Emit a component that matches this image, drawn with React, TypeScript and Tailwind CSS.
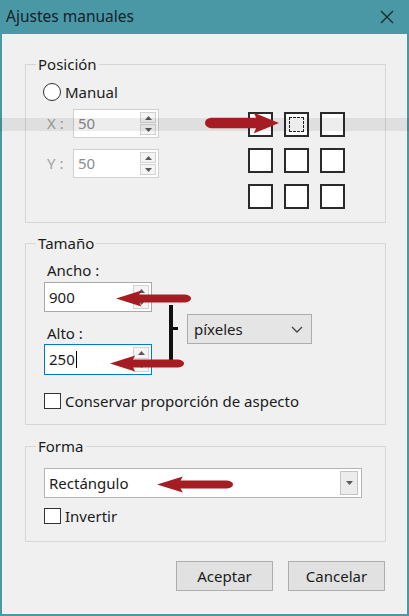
import React from "react";

function Tri({ up }: { up?: boolean }) {
  return (
    <svg width="7" height="4" viewBox="0 0 7 4">
      {up ? <path d="M0 4 L3.5 0 L7 4 Z" fill="#5a5a5a" /> : <path d="M0 0 L3.5 4 L7 0 Z" fill="#5a5a5a" />}
    </svg>
  );
}

function Spin() {
  return (
    <div className="flex flex-col w-[18px] h-full py-[2px] pr-[2px] gap-[1px]">
      <div className="flex-1 border border-[#d2d2d2] bg-[#f4f4f4] flex items-center justify-center">
        <Tri up />
      </div>
      <div className="flex-1 border border-[#d2d2d2] bg-[#f4f4f4] flex items-center justify-center">
        <Tri />
      </div>
    </div>
  );
}

function Square({ dotted }: { dotted?: boolean }) {
  return (
    <div className="w-[25px] h-[25px] border-2 border-[#2a2a2a] bg-white p-[3px]">
      {dotted && <div className="w-full h-full border border-dashed border-[#222]" />}
    </div>
  );
}

function Check() {
  return <div className="w-[17px] h-[16px] border border-[#333] bg-white" />;
}

const ARROW = "M0 15 L34 1 L31 8 L92 8 Q100 9.5 100 15 Q100 20.5 92 22 L31 22 L34 29 Z";

export default function App() {
  return (
    <div className="relative w-[409px] h-[616px] bg-[#4a97a6] flex flex-col font-['Noto_Sans',sans-serif] text-[15px] text-[#1b1b1b] overflow-hidden">
      <div className="h-[34px] flex items-center justify-between pl-[6px] pr-[15px]">
        <span className="text-[15.5px] text-[#13242a] leading-none">Ajustes manuales</span>
        <svg width="14" height="14" viewBox="0 0 14 14">
          <path d="M1 1 L13 13 M13 1 L1 13" stroke="#1a2a2e" strokeWidth="1.4" />
        </svg>
      </div>
      <div className="flex-1 mx-[2px] mb-[2px] bg-[#f0f0f0] flex flex-col pl-[23px] pr-[21px] pt-[20px]">
        {/* Posición */}
        <fieldset className="border border-[#d6d6d6] m-0 p-0 pb-[13px]">
          <legend className="ml-[10px] px-[2px] leading-[20px]">Posición</legend>
          <div className="flex items-center h-[20px] mt-[8px] ml-[17px] gap-[4px]">
            <div className="w-[18px] h-[18px] rounded-full border border-[#333] bg-white" />
            <span>Manual</span>
          </div>
          <div className="flex mt-[7px]">
            <div className="flex flex-col gap-[11px] ml-[21px]">
              <div className="flex items-center">
                <span className="w-[26px] text-[#a0a0a0]">X :</span>
                <div className="w-[86px] h-[29px] border border-[#d0d0d0] bg-white flex items-center">
                  <span className="flex-1 pl-[4px] text-[#8c8c8c]">50</span>
                  <Spin />
                </div>
              </div>
              <div className="flex items-center">
                <span className="w-[26px] text-[#a0a0a0]">Y :</span>
                <div className="w-[86px] h-[29px] border border-[#d0d0d0] bg-white flex items-center">
                  <span className="flex-1 pl-[4px] text-[#8c8c8c]">50</span>
                  <Spin />
                </div>
              </div>
            </div>
            <div className="grid grid-cols-3 gap-x-[11px] gap-y-[11px] ml-auto mr-[40px] mt-[3px]">
              <Square />
              <Square dotted />
              <Square />
              <Square />
              <Square />
              <Square />
              <Square />
              <Square />
              <Square />
            </div>
          </div>
        </fieldset>

        {/* Tamaño */}
        <fieldset className="border border-[#d6d6d6] m-0 p-0 pb-[13px] mt-[10px]">
          <legend className="ml-[10px] px-[2px] leading-[20px]">Tamaño</legend>
          <div className="flex items-start mt-[7px] ml-[18px]">
            <div className="flex flex-col w-[108px]">
              <span className="pl-[3px] leading-[20px]">Ancho :</span>
              <div className="mt-[2px] h-[30px] border border-[#a9a9a9] bg-white flex items-center">
                <span className="flex-1 pl-[4px]">900</span>
                <Spin />
              </div>
              <span className="pl-[3px] leading-[20px] mt-[11px]">Alto :</span>
              <div className="mt-[1px] h-[31px] border border-[#0078d7] bg-white flex items-center">
                <span className="flex-1 pl-[4px] flex items-center">
                  250<span className="inline-block w-[1px] h-[17px] bg-black ml-[1px]" />
                </span>
                <Spin />
              </div>
            </div>
            <svg className="ml-[17px] mt-[45px]" width="10" height="55" viewBox="0 0 10 55">
              <rect x="0" y="0" width="4" height="55" fill="#111" />
              <rect x="4" y="22" width="5" height="3" fill="#111" />
            </svg>
            <div className="ml-[8px] mt-[54px] w-[125px] h-[30px] border border-[#adadad] bg-[#e5e5e5] flex items-center justify-between pl-[6px] pr-[8px]">
              <span>píxeles</span>
              <svg width="12" height="7" viewBox="0 0 12 7">
                <path d="M1 1 L6 6 L11 1" stroke="#444" strokeWidth="1.3" fill="none" />
              </svg>
            </div>
          </div>
          <div className="flex items-center h-[20px] mt-[16px] ml-[18px] gap-[4px]">
            <Check />
            <span>Conservar proporción de aspecto</span>
          </div>
        </fieldset>

        {/* Forma */}
        <fieldset className="border border-[#d6d6d6] m-0 p-0 pb-[15px] mt-[11px]">
          <legend className="ml-[10px] px-[2px] leading-[20px]">Forma</legend>
          <div className="mt-[12px] ml-[18px] w-[318px] h-[30px] border border-[#b4b4b4] bg-white flex items-center justify-between pl-[4px] pr-[3px]">
            <span>Rectángulo</span>
            <div className="w-[18px] h-[24px] border border-[#c4c4c4] bg-[#ececec] flex items-center justify-center">
              <Tri />
            </div>
          </div>
          <div className="flex items-center h-[20px] mt-[8px] ml-[18px] gap-[4px]">
            <Check />
            <span>Invertir</span>
          </div>
        </fieldset>

        <div className="flex justify-end gap-[15px] mt-[19px] pr-[1px]">
          <button className="w-[97px] h-[30px] border border-[#adadad] bg-[#e1e1e1]">Aceptar</button>
          <button className="w-[97px] h-[30px] border border-[#adadad] bg-[#e1e1e1]">Cancelar</button>
        </div>
      </div>

      {/* light band */}
      <div className="absolute left-0 top-[118px] w-full h-[13px] bg-black/[0.07]" />

      {/* red arrows */}
      <svg className="absolute left-[205px] top-[112px] w-[74px] h-[22px]" viewBox="0 0 100 30" preserveAspectRatio="none">
        <g transform="translate(100,0) scale(-1,1)">
          <path d={ARROW} fill="#a51d22" />
        </g>
      </svg>
      <svg className="absolute left-[116px] top-[290px] w-[75px] h-[17px]" viewBox="0 0 100 30" preserveAspectRatio="none">
        <path d={ARROW} fill="#a51d22" />
      </svg>
      <svg className="absolute left-[110px] top-[355px] w-[74px] h-[17px]" viewBox="0 0 100 30" preserveAspectRatio="none">
        <path d={ARROW} fill="#a51d22" />
      </svg>
      <svg className="absolute left-[157px] top-[476px] w-[76px] h-[17px]" viewBox="0 0 100 30" preserveAspectRatio="none">
        <path d={ARROW} fill="#a51d22" />
      </svg>
    </div>
  );
}
